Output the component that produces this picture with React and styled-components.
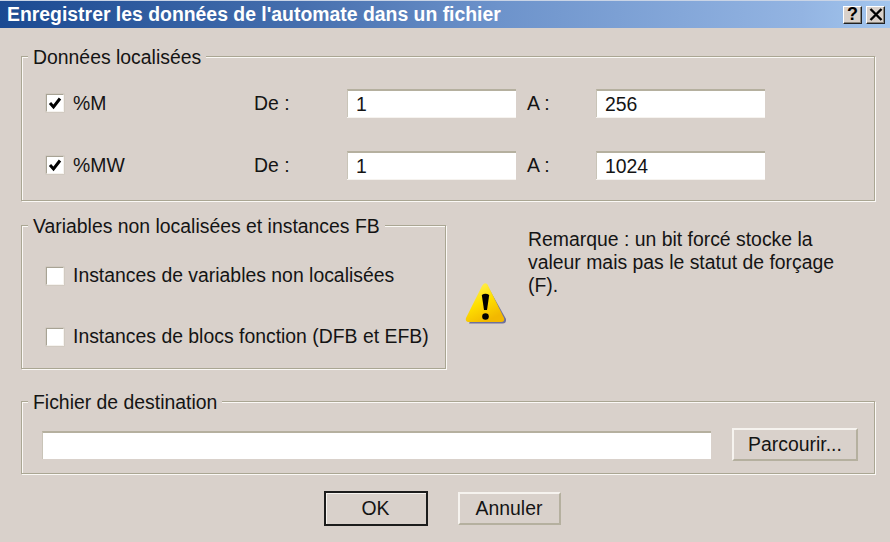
import React from "react";
import styled, { createGlobalStyle } from "styled-components";

const GlobalStyle = createGlobalStyle`
  html, body {
    margin: 0;
    padding: 0;
    background: #d9d1cb;
  }
  * {
    box-sizing: border-box;
  }
`;

const WarningIcon = () => (
  <svg width="44" height="44" viewBox="0 0 44 44">
    <defs>
      <linearGradient id="warnFill" x1="0" y1="0" x2="0.5" y2="1">
        <stop offset="0" stopColor="#fff36a" />
        <stop offset="0.55" stopColor="#ffe000" />
        <stop offset="1" stopColor="#f2b800" />
      </linearGradient>
    </defs>
    <path d="M22 3 L41 37 Q41.5 41.5 37.5 41.5 L4 41.5 Z" fill="#4a4f8c" opacity="0.75" />
    <path
      d="M18.5 2 Q20.5 0.5 22.5 2.5 L39 36 Q40 40 36 40 L3 40 Q0 39 1 36 L17 4 Z"
      fill="url(#warnFill)"
    />
    <path d="M16.8 13 Q20.5 10.5 24.2 13 L22 28 L19 28 Z" fill="#000" />
    <circle cx="20.5" cy="34.5" r="3.3" fill="#000" />
  </svg>
);

const App = () => {
  return (
    <>
      <GlobalStyle />
      <Dialog>
        <TitleBar>
          <Title>Enregistrer les données de l'automate dans un fichier</Title>
          <TitleButtons>
            <TitleButton>?</TitleButton>
            <TitleButton>
              <svg width="14" height="13" viewBox="0 0 14 13">
                <path d="M1.5 1 L12.5 12 M12.5 1 L1.5 12" stroke="#000" strokeWidth="2.4" />
              </svg>
            </TitleButton>
          </TitleButtons>
        </TitleBar>

        <Body>
          <Group $height={145}>
            <Legend>Données localisées</Legend>
            <RangeRow>
              <Check checked label="%M" width={208} />
              <FieldLabel $width={93}>De :</FieldLabel>
              <TextBox>1</TextBox>
              <FieldLabel $width={80} $indent={11}>A :</FieldLabel>
              <TextBox>256</TextBox>
            </RangeRow>
            <RangeRow>
              <Check checked label="%MW" width={208} />
              <FieldLabel $width={93}>De :</FieldLabel>
              <TextBox>1</TextBox>
              <FieldLabel $width={80} $indent={11}>A :</FieldLabel>
              <TextBox>1024</TextBox>
            </RangeRow>
          </Group>

          <MiddleRow>
            <Group $width={425} $height={144}>
              <Legend>Variables non localisées et instances FB</Legend>
              <CheckList>
                <Check label="Instances de variables non localisées" />
                <Check label="Instances de blocs fonction (DFB et EFB)" />
              </CheckList>
            </Group>
            <WarningSlot>
              <WarningIcon />
            </WarningSlot>
            <Note>
              Remarque : un bit forcé stocke la
              <br />
              valeur mais pas le statut de forçage
              <br />
              (F).
            </Note>
          </MiddleRow>

          <Group $height={73}>
            <Legend>Fichier de destination</Legend>
            <FileRow>
              <FileBox />
              <Button $width={126} $height={33}>Parcourir...</Button>
            </FileRow>
          </Group>

          <Actions>
            <DefaultButton>OK</DefaultButton>
            <Button $width={103} $height={33}>Annuler</Button>
          </Actions>
        </Body>
      </Dialog>
    </>
  );
};

const Check = ({ checked, label, width }) => (
  <CheckWrap $width={width}>
    <CheckBox>
      {checked && (
        <svg width="14" height="14" viewBox="0 0 14 14">
          <path d="M2 7 L5.5 11 L12 2.5" fill="none" stroke="#000" strokeWidth="3" />
        </svg>
      )}
    </CheckBox>
    <span>{label}</span>
  </CheckWrap>
);

export default App;

const Dialog = styled.div`
  width: 890px;
  height: 542px;
  overflow: hidden;
  background: #d9d1cb;
  color: #141414;
  font-family: "Liberation Sans", Arial, sans-serif;
  font-size: 19.4px;
`;

const TitleBar = styled.div`
  height: 28px;
  display: flex;
  align-items: center;
  justify-content: space-between;
  padding: 0 5px 0 7px;
  background: linear-gradient(to right, #1b4a92 0%, #466fae 34%, #6d93cb 56%, #93b4e2 90%, #a3c6ee 100%);
  border-top: 1px solid #c9d4e6;
`;

const Title = styled.div`
  color: #fff;
  font-weight: bold;
  font-size: 19.4px;
  white-space: nowrap;
`;

const TitleButtons = styled.div`
  display: flex;
  gap: 4px;
`;

const TitleButton = styled.div`
  width: 19px;
  height: 18px;
  display: flex;
  align-items: center;
  justify-content: center;
  background: #d9d1cb;
  color: #000;
  font-weight: bold;
  font-size: 18px;
  border: 1px solid;
  border-color: #fff #222 #222 #fff;
  box-shadow: inset -1px -1px 0 #8a857c;
`;

const Body = styled.div`
  display: flex;
  flex-direction: column;
  padding: 28px 15px 0 21px;
`;

const Group = styled.div`
  position: relative;
  width: ${(p) => (p.$width ? `${p.$width}px` : "100%")};
  height: ${(p) => p.$height}px;
  border: 1px solid #aaa693;
  box-shadow: inset 1px 1px 0 #fbf9f6, 1px 1px 0 #fbf9f6;
`;

const Legend = styled.div`
  position: absolute;
  top: -11px;
  left: 6px;
  padding: 0 5px;
  background: #d9d1cb;
  line-height: 22px;
  white-space: nowrap;
`;

const RangeRow = styled.div`
  display: flex;
  align-items: center;
  height: 28px;
  margin: 32px 0 0 24px;

  & + & {
    margin-top: 34px;
  }
`;

const CheckWrap = styled.label`
  display: flex;
  align-items: center;
  gap: 9px;
  width: ${(p) => (p.$width ? `${p.$width}px` : "auto")};
  white-space: nowrap;
`;

const CheckBox = styled.span`
  width: 18px;
  height: 18px;
  display: flex;
  align-items: center;
  justify-content: center;
  background: #fff;
  border: 1px solid;
  border-color: #a8a395 #f6f3ef #f6f3ef #a8a395;
  box-shadow: 0 0 0 0.5px #c9c4b8;
`;

const FieldLabel = styled.span`
  width: ${(p) => p.$width}px;
  padding-left: ${(p) => p.$indent || 0}px;
`;

const TextBox = styled.div`
  width: 169px;
  height: 28px;
  display: flex;
  align-items: center;
  padding-left: 8px;
  background: #fff;
  border-top: 2px solid #b5b09f;
  border-left: 1px solid #c9c4b8;
  box-shadow: 0 1px 0 #f6f3ef;
`;

const MiddleRow = styled.div`
  display: flex;
  margin: 24px 0 32px;
`;

const CheckList = styled.div`
  display: flex;
  flex-direction: column;
  gap: 38px;
  padding: 38px 0 0 24px;
`;

const WarningSlot = styled.div`
  width: 62px;
  padding: 57px 0 0 19px;
`;

const Note = styled.div`
  padding: 3px 0 0 20px;
  line-height: 23px;
  white-space: nowrap;
`;

const FileRow = styled.div`
  display: flex;
  align-items: center;
  gap: 21px;
  padding: 26px 0 0 20px;
`;

const FileBox = styled.div`
  width: 669px;
  height: 28px;
  background: #fff;
  border-top: 2px solid #b5b09f;
  border-left: 1px solid #c9c4b8;
`;

const Button = styled.div`
  width: ${(p) => p.$width}px;
  height: ${(p) => p.$height}px;
  display: flex;
  align-items: center;
  justify-content: center;
  background: #d9d1cb;
  border: 2px solid;
  border-color: #f6f3ef #b5b09f #b5b09f #f6f3ef;
`;

const DefaultButton = styled(Button).attrs({ $width: 104, $height: 35 })`
  border: 2px solid #1c1c1c;
  box-shadow: inset 1px 1px 0 #f6f3ef;
`;

const Actions = styled.div`
  display: flex;
  align-items: center;
  justify-content: center;
  gap: 30px;
  margin-top: 17px;
  padding-right: 12px;
`;
